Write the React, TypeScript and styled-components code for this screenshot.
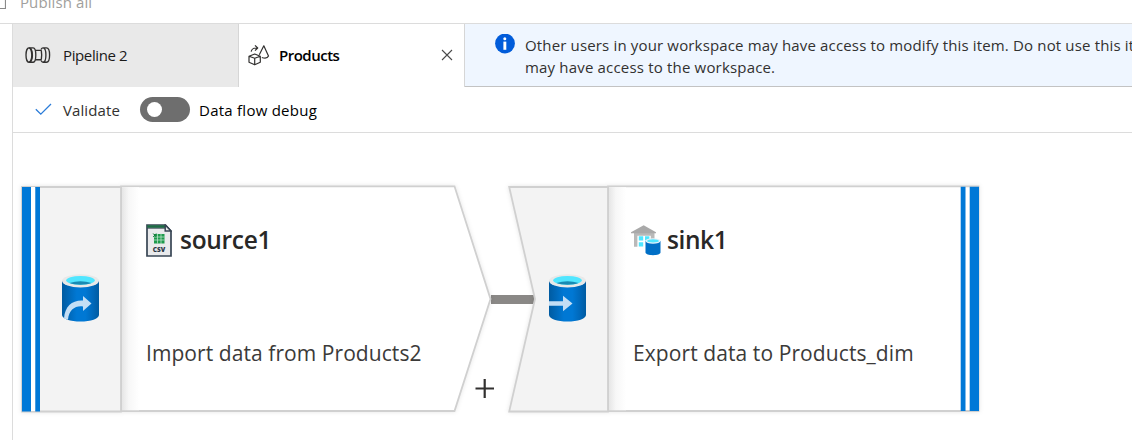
import React from "react";
import styled, { createGlobalStyle } from "styled-components";

const GlobalStyle = createGlobalStyle`
  * { box-sizing: border-box; }
  body {
    margin: 0;
    overflow: hidden;
    background: #fff;
    font-family: "Open Sans", "Noto Sans", sans-serif;
    color: #000;
  }
  svg { display: block; flex: none; }
`;

const Page = styled.div`
  display: flex;
  flex-direction: column;
  width: 1132px;
  height: 440px;
  overflow: hidden;
`;

const TopBar = styled.header`
  display: flex;
  flex: none;
  height: 24px;
  border-bottom: 1px solid #dcdcdc;
  overflow: hidden;
`;

const Label = styled.span<{ $size?: number; $spacing?: number; $color?: string; $weight?: number }>`
  font-size: ${(p) => p.$size ?? 15}px;
  letter-spacing: ${(p) => p.$spacing ?? 0}px;
  color: ${(p) => p.$color ?? "#1b1a19"};
  font-weight: ${(p) => p.$weight ?? 400};
  line-height: 22px;
  white-space: nowrap;
`;

const PublishLabel = styled(Label)`
  margin: -9px 0 0 14px;
`;

const Workspace = styled.main`
  display: flex;
  flex: 1;
  flex-direction: column;
  margin-left: 12px;
  border-left: 1px solid #dcdcdc;
`;

const TabStrip = styled.div`
  display: flex;
  flex: none;
  height: 63px;
`;

const Tab = styled.div<{ $active?: boolean }>`
  display: flex;
  flex: none;
  align-items: center;
  width: 226px;
  padding: 0 11px 1px ${(p) => (p.$active ? 9 : 12)}px;
  border-right: 1px solid #d6d6d6;
  background: ${(p) => (p.$active ? "#fff" : "#e9e9e9")};
`;

const TabTitle = styled(Label)`
  flex: 1;
  margin-left: ${(p) => (p.$weight ? 9 : 12)}px;
`;

const Banner = styled.div`
  display: flex;
  flex: 1;
  min-width: 0;
  padding: 10px 0 0 30px;
  background: #eff6ff;
  border-bottom: 1px solid #c3c3c3;
  overflow: hidden;
`;

const BannerText = styled.div`
  display: flex;
  flex-direction: column;
  margin-left: 10px;
`;

const Toolbar = styled.div`
  display: flex;
  flex: none;
  align-items: center;
  height: 46px;
  padding-left: 22px;
  border-bottom: 1px solid #dcdcdc;
`;

const ValidateButton = styled.div`
  display: flex;
  align-items: center;
  gap: 11px;
  width: 105px;
`;

const Switch = styled.div`
  display: flex;
  align-items: center;
  width: 50px;
  height: 25px;
  margin-right: 9px;
  padding-left: 7px;
  border-radius: 13px;
  background: #6e6e6e;
`;

const Knob = styled.div`
  width: 15px;
  height: 15px;
  border-radius: 50%;
  background: #fff;
`;

const Canvas = styled.section`
  position: relative;
  flex: 1;
`;

const FlowNode = styled.article<{ $x: number; $y: number; $w: number }>`
  position: absolute;
  left: ${(p) => p.$x}px;
  top: ${(p) => p.$y}px;
  width: ${(p) => p.$w}px;
  height: 230px;
  display: flex;
`;

const NodeOutline = styled.svg`
  position: absolute;
  inset: 0;
  overflow: visible;
  filter: drop-shadow(0 0 2px rgba(0, 0, 0, 0.1));
`;

const NodeSide = styled.div<{ $w: number }>`
  position: relative;
  flex: none;
  width: ${(p) => p.$w}px;
  padding: 89px 0 0 41px;
`;

const NodeBody = styled.div`
  position: relative;
  display: flex;
  flex-direction: column;
  gap: 85px;
  padding-top: 38px;
`;

const NodeHeading = styled.div<{ $gap: number }>`
  display: flex;
  align-items: center;
  gap: ${(p) => p.$gap}px;
  height: 34px;
`;

const SinkHeading = styled(NodeHeading)`
  margin-left: -2px;
`;

const Link = styled.div`
  position: absolute;
  left: 478px;
  top: 162px;
  width: 44px;
  height: 9px;
  background: #8a8886;
`;

const AddButton = styled.div`
  position: absolute;
  left: 462px;
  top: 246px;
`;

const PipelineIcon = () => (
  <svg width="26" height="18" viewBox="0 0 26 18" fill="none" stroke="#323130" strokeWidth="1.35">
    <ellipse cx="3.900" cy="9" rx="2.900" ry="7.200" />
    <path d="M3.900 1.800h4.300c1.700 0 2.600 3 2.600 7.200s-.9 7.200-2.600 7.200H3.900M5 2c2 1.500 2.400 4 2.400 7s-.4 5.500-2.400 7M10.300 4.300h6.200M10.300 13.700h6.200" />
    <path d="M18 1.800h3.500c2 0 3.100 3.100 3.100 7.200s-1.100 7.200-3.100 7.200H18M16 3.500c.5-1 1.200-1.700 2-1.700 1.800 0 2.900 3.100 2.900 7.200s-1.100 7.200-2.900 7.200c-.8 0-1.500-.7-2-1.700M16.300 4.300c.5 3 .5 6.400 0 9.400" />
  </svg>
);

const DataflowIcon = () => (
  <svg width="22" height="22" viewBox="0 0 22 22" fill="none" stroke="#323130" strokeWidth="1.2" strokeLinejoin="round">
    <path d="M1 12.200 6.700 10l5.600 2.200v6.100l-5.600 2.500L1 18.300zM1 12.200l5.700 2.100 5.600-2.100M6.700 14.300v6.500" />
    <path d="M11.300 10.700 15.800 1.800l4.700 10.200c-.7 1.700-3.500 2.500-6.700 1.500" />
    <path d="M3.200 7.600C3.600 5 5.500 3.800 9.300 4M7 1.300 9.700 4 7 6.600" />
  </svg>
);

const CloseIcon = () => (
  <svg width="12" height="12" viewBox="0 0 12 12" stroke="#4a4a4a" strokeWidth="1.1">
    <path d="M1 1 11 11M11 1 1 11" />
  </svg>
);

const InfoIcon = () => (
  <svg width="20" height="20" viewBox="0 0 20 20">
    <circle cx="10" cy="9.500" r="9.900" fill="#015cda" />
    <circle cx="9.800" cy="4.800" r="1.500" fill="#fff" />
    <rect x="8.400" y="7.600" width="2.900" height="8.200" fill="#fff" />
  </svg>
);

const CheckIcon = () => (
  <svg width="17" height="14" viewBox="0 0 17 14" fill="none" stroke="#2b7cd8" strokeWidth="1.3">
    <path d="M.8 6.200 5.800 11.200 16 1" />
  </svg>
);

const Cylinder = ({ id, children }: { id: string; children: React.ReactNode }) => (
  <svg width="37" height="48" viewBox="0 0 37 48">
    <defs>
      <linearGradient id={id}>
        <stop offset="0" stopColor="#005ba1" />
        <stop offset=".2" stopColor="#0069ba" />
        <stop offset=".4" stopColor="#0078d4" />
        <stop offset=".63" stopColor="#0078d4" />
        <stop offset=".85" stopColor="#0067b8" />
        <stop offset="1" stopColor="#005ba1" />
      </linearGradient>
    </defs>
    <path d="M0 7v34c0 3.700 8.300 6.600 18.500 6.600S37 44.700 37 41V7z" fill={`url(#${id})`} />
    <ellipse cx="18.500" cy="6.800" rx="18.500" ry="6.600" fill="#e8e8e8" />
    <ellipse cx="18.500" cy="6.300" rx="14.300" ry="4.400" fill="#50e6ff" />
    <path d="M7.500 9a23 13 0 0 1 22 0c-5 2.200-17 2.200-22 0z" fill="#198ab3" />
    {children}
  </svg>
);

const CsvIcon = () => (
  <svg width="26" height="33" viewBox="0 0 26 33">
    <path d="M1 1h18.500L25 7v25H1z" fill="#e9eaec" stroke="#384554" strokeWidth="1.700" />
    <path d="M1.200 1.200h18v2.700h-18z" fill="#1d6b45" />
    <path d="M1 4.300h18" stroke="#384554" strokeWidth=".8" />
    <path d="M19.200 1v6H25z" fill="#e9eaec" stroke="#384554" strokeWidth="1.500" />
    <path d="M8 10h10.500v9.500H8z" fill="#1d9a4c" />
    <path d="M7 13h11.500M7 16h11.500M11.500 9.500v10M15 9v11" stroke="#c9e8d4" strokeWidth=".7" />
    <path d="m7.200 9.500 3 3.500m0-3.500-3 3.500" stroke="#167a3d" strokeWidth="1" />
    <text x="13" y="28" textAnchor="middle" fontFamily="Open Sans" fontSize="6.500" fontWeight="800" fill="#2b3846">CSV</text>
  </svg>
);

const WarehouseIcon = () => (
  <svg width="31" height="31" viewBox="0 0 31 31">
    <path d="M3 8h20.500v13.500h-3.700V10.700H6.400v11H3z" fill="#b9b9b9" />
    <path d="M0 8.300V7.300L12.700.3 25 7.300v1z" fill="#a9a9a9" />
    <path d="M7.800 11.200h4.400v4.400H7.800zM14 11.200h4.400v4.400H14zM7.800 17.200h4.400v4.300H7.800z" fill="#50e6ff" />
    <path d="M14.500 16v11.500c0 1.600 3.400 2.700 7.500 2.700s7.500-1.100 7.500-2.700V16z" fill="#006fc6" />
    <ellipse cx="22" cy="16" rx="7.500" ry="2.700" fill="#e3f2fa" />
    <ellipse cx="22" cy="15.900" rx="5.800" ry="1.700" fill="#50e6ff" />
  </svg>
);

export default function App() {
  return (
    <Page>
      <GlobalStyle />
      <TopBar>
        <svg width="6" height="10" viewBox="0 0 6 10">
          <path d="M0 8.500h5.500V0" fill="none" stroke="#8a8a8a" strokeWidth="1.200" />
        </svg>
        <PublishLabel $color="#a19f9d" $spacing={0.1}>Publish all</PublishLabel>
      </TopBar>
      <Workspace>
        <TabStrip>
          <Tab>
            <PipelineIcon />
            <TabTitle $spacing={-0.38}>Pipeline 2</TabTitle>
          </Tab>
          <Tab $active>
            <DataflowIcon />
            <TabTitle $weight={600} $color="#000" $spacing={-0.5}>Products</TabTitle>
            <CloseIcon />
          </Tab>
          <Banner>
            <InfoIcon />
            <BannerText>
              <Label $color="#323130" $spacing={0.155}>Other users in your workspace may have access to modify this item. Do not use this item</Label>
              <Label $color="#323130" $spacing={0.18}>may have access to the workspace.</Label>
            </BannerText>
          </Banner>
        </TabStrip>
        <Toolbar>
          <ValidateButton>
            <CheckIcon />
            <Label $color="#323130" $spacing={0.1}>Validate</Label>
          </ValidateButton>
          <Switch><Knob /></Switch>
          <Label $color="#000" $spacing={0.25}>Data flow debug</Label>
        </Toolbar>
        <Canvas>
          <Link />
          <FlowNode $x={8} $y={52} $w={472}>
            <NodeOutline width="472" height="230" viewBox="0 0 472 230">
              <defs>
                <linearGradient id="edgeShade">
                  <stop offset="0" stopColor="#e6e6e6" />
                  <stop offset=".4" stopColor="#f7f7f7" />
                  <stop offset="1" stopColor="#fff" />
                </linearGradient>
              </defs>
              <path d="M100 1.300h333.500l36 112.700-36 112H100z" fill="#fff" stroke="#d0d0d0" strokeWidth="1.800" />
              <path d="M101 2.200h17v223h-17z" fill="url(#edgeShade)" />
              <path d="M1 2h99v224.500H1z" fill="#f3f3f3" stroke="#d0d0d0" strokeWidth="1.800" />
              <path d="M10 2h4v224h-4z" fill="#fff" />
              <path d="M1 2h9v224.500H1zM14.300 2H19v224.500h-4.700z" fill="#0078d7" />
            </NodeOutline>
            <NodeSide $w={125}>
              <Cylinder id="sourceBody">
                <path d="M2 44.500C3 32 10 26 21 26.500V22L29.500 29.500 21 37v-4.500C13 31.500 7 36 6 45.700z" fill="#c3def5" />
              </Cylinder>
            </NodeSide>
            <NodeBody>
              <NodeHeading $gap={8}>
                <CsvIcon />
                <Label $size={24.5} $weight={600} $color="#292827" $spacing={-0.3}>source1</Label>
              </NodeHeading>
              <Label $size={21} $color="#3b3a39" $spacing={0.07}>Import data from Products2</Label>
            </NodeBody>
          </FlowNode>
          <FlowNode $x={495} $y={52} $w={474}>
            <NodeOutline width="474" height="230" viewBox="0 0 474 230">
              <path d="M100 1.300h370.500V226H100z" fill="#fff" stroke="#d0d0d0" strokeWidth="1.800" />
              <path d="M101 2.200h17v223h-17z" fill="url(#edgeShade)" />
              <path d="M1.200 2H100v224.500H1.200L27 114z" fill="#f3f3f3" stroke="#d0d0d0" strokeWidth="1.800" />
              <path d="M452.700 1.800h4.800v224.200h-4.800zM461.700 1.800h9.300v224.200h-9.300z" fill="#0078d7" />
            </NodeOutline>
            <NodeSide $w={125}>
              <Cylinder id="sinkBody">
                <path d="M0 27.300h14V21.700L23.500 29.500 14 37.300v-5.500H0z" fill="#c3def5" />
              </Cylinder>
            </NodeSide>
            <NodeBody>
              <SinkHeading $gap={5}>
                <WarehouseIcon />
                <Label $size={24.5} $weight={600} $color="#292827" $spacing={-0.4}>sink1</Label>
              </SinkHeading>
              <Label $size={21} $color="#3b3a39" $spacing={0.09}>Export data to Products_dim</Label>
            </NodeBody>
          </FlowNode>
          <AddButton>
            <svg width="20" height="20" viewBox="0 0 20 20" stroke="#323130" strokeWidth="2.200">
              <path d="M.5 9.500h18.500M9.700 0v19" />
            </svg>
          </AddButton>
        </Canvas>
      </Workspace>
    </Page>
  );
}
